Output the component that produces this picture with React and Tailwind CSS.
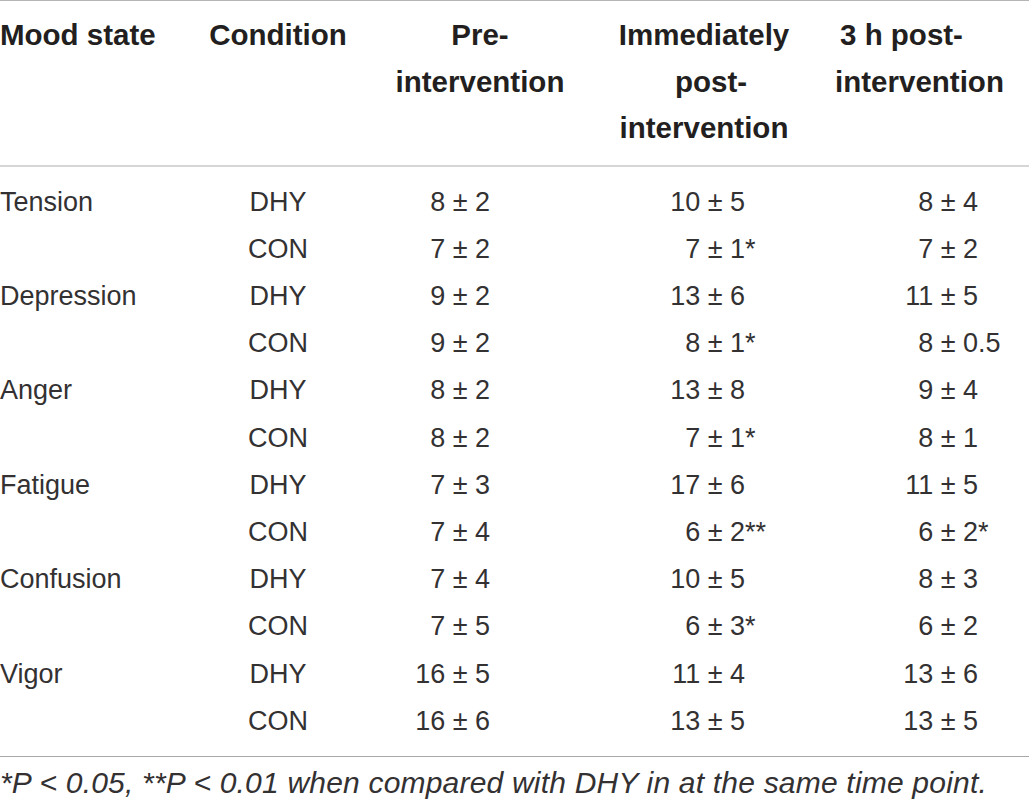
import React from 'react';

const cols = 'grid grid-cols-[200px_156px_248px_200px_225px]';

const rows = [
  { mood: 'Tension', cond: 'DHY', pre: ['8 ± 2', ''], imm: ['10 ± 5', ''], post: ['8 ± 4', ''] },
  { mood: '', cond: 'CON', pre: ['7 ± 2', ''], imm: ['7 ± 1', '*'], post: ['7 ± 2', ''] },
  { mood: 'Depression', cond: 'DHY', pre: ['9 ± 2', ''], imm: ['13 ± 6', ''], post: ['11 ± 5', ''] },
  { mood: '', cond: 'CON', pre: ['9 ± 2', ''], imm: ['8 ± 1', '*'], post: ['8 ± 0', '.5'] },
  { mood: 'Anger', cond: 'DHY', pre: ['8 ± 2', ''], imm: ['13 ± 8', ''], post: ['9 ± 4', ''] },
  { mood: '', cond: 'CON', pre: ['8 ± 2', ''], imm: ['7 ± 1', '*'], post: ['8 ± 1', ''] },
  { mood: 'Fatigue', cond: 'DHY', pre: ['7 ± 3', ''], imm: ['17 ± 6', ''], post: ['11 ± 5', ''] },
  { mood: '', cond: 'CON', pre: ['7 ± 4', ''], imm: ['6 ± 2', '**'], post: ['6 ± 2', '*'] },
  { mood: 'Confusion', cond: 'DHY', pre: ['7 ± 4', ''], imm: ['10 ± 5', ''], post: ['8 ± 3', ''] },
  { mood: '', cond: 'CON', pre: ['7 ± 5', ''], imm: ['6 ± 3', '*'], post: ['6 ± 2', ''] },
  { mood: 'Vigor', cond: 'DHY', pre: ['16 ± 5', ''], imm: ['11 ± 4', ''], post: ['13 ± 6', ''] },
  { mood: '', cond: 'CON', pre: ['16 ± 6', ''], imm: ['13 ± 5', ''], post: ['13 ± 5', ''] },
];

// number is right aligned, the suffix (stars or decimals) hangs after it
const Value = ({ v, offset }) => (
  <div className={`flex ${offset}`}>
    <span className="w-[100px] text-right">{v[0]}</span>
    <span className="text-left">{v[1]}</span>
  </div>
);

const App = () => {
  return (
    <div
      className="w-[1029px] h-[801px] bg-white text-[#231f20] overflow-hidden"
      style={{ fontFamily: '"Liberation Sans", Arial, sans-serif' }}
    >
      <div className="border-t-[1.5px] border-[#b5b5b5]">
        <div className={`${cols} pt-[11px] pb-[13px] text-[29.5px] leading-[46.5px] font-bold border-b-2 border-[#d6d6d6]`}>
          <div className="whitespace-nowrap">Mood state</div>
          <div className="text-center">Condition</div>
          <div className="text-center">
            <div>Pre-</div>
            <div>intervention</div>
          </div>
          <div className="text-center">
            <div>Immediately</div>
            <div className="pl-[14px]">post-</div>
            <div>intervention</div>
          </div>
          <div className="text-center whitespace-nowrap">
            <div className="pr-[30px]">3 h post-</div>
            <div className="pl-[6px]">intervention</div>
          </div>
        </div>

        <div className="pt-[12px] pb-[11px] text-[27px] leading-[47.2px] text-[#333132] border-b-[1.5px] border-[#a8a8a8]">
          {rows.map((r, i) => (
            <div key={i} className={cols}>
              <div>{r.mood}</div>
              <div className="text-center">{r.cond}</div>
              <Value v={r.pre} offset="ml-[34px]" />
              <Value v={r.imm} offset="ml-[41px]" />
              <Value v={r.post} offset="ml-[74px]" />
            </div>
          ))}
        </div>

        <p className="pt-[9px] text-[30px] leading-[34px] italic text-[#333132] whitespace-nowrap tracking-[0.2px]">
          *P &lt; 0.05, **P &lt; 0.01 when compared with DHY in at the same time point.
        </p>
      </div>
    </div>
  );
};

export default App;
